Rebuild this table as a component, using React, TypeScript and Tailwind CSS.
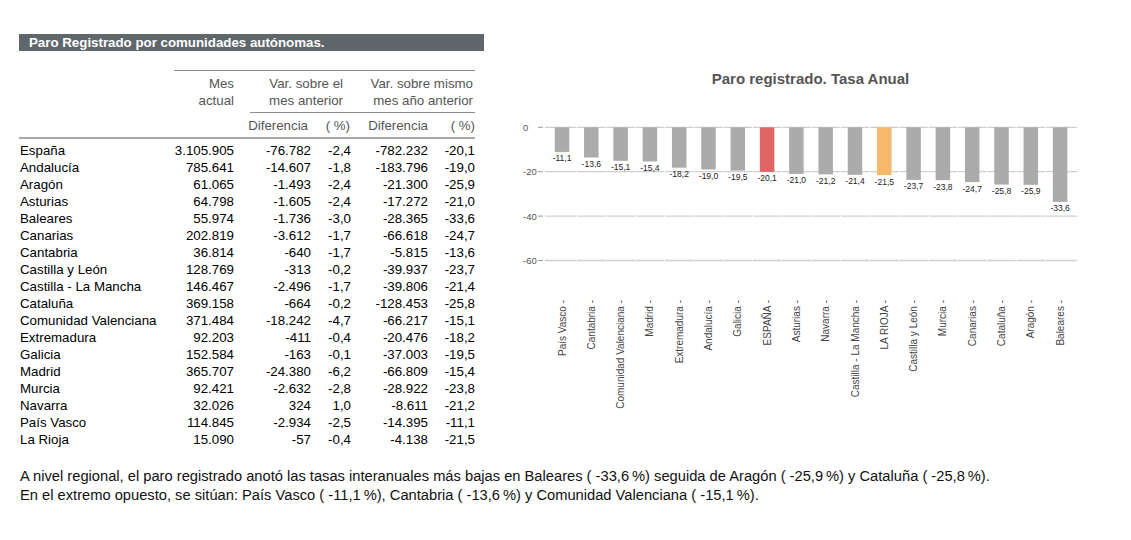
import React from "react";

const rows: [string, string, string, string, string, string][] = [
  ["España", "3.105.905", "-76.782", "-2,4", "-782.232", "-20,1"],
  ["Andalucía", "785.641", "-14.607", "-1,8", "-183.796", "-19,0"],
  ["Aragón", "61.065", "-1.493", "-2,4", "-21.300", "-25,9"],
  ["Asturias", "64.798", "-1.605", "-2,4", "-17.272", "-21,0"],
  ["Baleares", "55.974", "-1.736", "-3,0", "-28.365", "-33,6"],
  ["Canarias", "202.819", "-3.612", "-1,7", "-66.618", "-24,7"],
  ["Cantabria", "36.814", "-640", "-1,7", "-5.815", "-13,6"],
  ["Castilla y León", "128.769", "-313", "-0,2", "-39.937", "-23,7"],
  ["Castilla - La Mancha", "146.467", "-2.496", "-1,7", "-39.806", "-21,4"],
  ["Cataluña", "369.158", "-664", "-0,2", "-128.453", "-25,8"],
  ["Comunidad Valenciana", "371.484", "-18.242", "-4,7", "-66.217", "-15,1"],
  ["Extremadura", "92.203", "-411", "-0,4", "-20.476", "-18,2"],
  ["Galicia", "152.584", "-163", "-0,1", "-37.003", "-19,5"],
  ["Madrid", "365.707", "-24.380", "-6,2", "-66.809", "-15,4"],
  ["Murcia", "92.421", "-2.632", "-2,8", "-28.922", "-23,8"],
  ["Navarra", "32.026", "324", "1,0", "-8.611", "-21,2"],
  ["País Vasco", "114.845", "-2.934", "-2,5", "-14.395", "-11,1"],
  ["La Rioja", "15.090", "-57", "-0,4", "-4.138", "-21,5"],
];

const bars: [string, number, string][] = [
  ["País Vasco", -11.1, "#ababab"],
  ["Cantabria", -13.6, "#ababab"],
  ["Comunidad Valenciana", -15.1, "#ababab"],
  ["Madrid", -15.4, "#ababab"],
  ["Extremadura", -18.2, "#ababab"],
  ["Andalucía", -19.0, "#ababab"],
  ["Galicia", -19.5, "#ababab"],
  ["ESPAÑA", -20.1, "#e06666"],
  ["Asturias", -21.0, "#ababab"],
  ["Navarra", -21.2, "#ababab"],
  ["Castilla - La Mancha", -21.4, "#ababab"],
  ["LA RIOJA", -21.5, "#f6b96b"],
  ["Castilla y León", -23.7, "#ababab"],
  ["Murcia", -23.8, "#ababab"],
  ["Canarias", -24.7, "#ababab"],
  ["Cataluña", -25.8, "#ababab"],
  ["Aragón", -25.9, "#ababab"],
  ["Baleares", -33.6, "#ababab"],
];

const Y0 = 127.3;
const K = 2.22;
const X0 = 562;
const STEP = 29.3;
const BW = 14.5;
const FF = "'Liberation Sans', Arial, sans-serif";

function Chart() {
  const grid = [0, -20, -40, -60];
  return (
    <svg width={600} height={460} viewBox="500 0 600 460" className="block shrink-0">
      <text x={810.5} y={84} textAnchor="middle" fontFamily={FF} fontWeight="bold" fontSize={15} fill="#555555">
        Paro registrado. Tasa Anual
      </text>
      {grid.map((g) => {
        const y = Y0 - g * K;
        return (
          <g key={g}>
            <text x={523} y={y + 3.5} fontFamily={FF} fontSize={9.5} fill="#555555">
              {g}
            </text>
            <line x1={538} x2={543} y1={y} y2={y} stroke="#9a9a9a" strokeWidth={1} />
            <line x1={545} x2={1077} y1={y} y2={y} stroke="#cfcfcf" strokeWidth={1.3} />
            {bars.slice(0, 17).map((_, i) => (
              <rect key={i} x={X0 + i * STEP + STEP / 2 - 0.5} y={y - 1} width={1} height={2} fill="#ffffff" />
            ))}
          </g>
        );
      })}
      {bars.map(([name, v, color], i) => {
        const cx = X0 + i * STEP;
        const h = -v * K;
        return (
          <g key={name}>
            <rect x={cx - BW / 2} y={Y0} width={BW} height={h} fill={color} />
            <text x={cx} y={Y0 + h + 9.5} textAnchor="middle" fontFamily={FF} fontSize={8.5} fill="#222222">
              {v.toFixed(1).replace(".", ",")}
            </text>
            <text
              transform={`translate(${cx + 3.5}, 300) rotate(-90)`}
              textAnchor="end"
              fontFamily={FF}
              fontSize={10}
              fill="#444444"
            >
              {name} -
            </text>
          </g>
        );
      })}
    </svg>
  );
}

export default function App() {
  return (
    <div className="w-[1131px] h-[540px] bg-white font-['Liberation_Sans',Arial,sans-serif] text-black overflow-hidden">
      <div className="flex">
        <div className="w-[500px] shrink-0 pl-[19px] pt-[34px]">
          <div className="w-[465px] h-[17px] bg-[#5f676b] text-white font-bold text-[13.3px] leading-[17px] pl-[10px]">
            Paro Registrado por comunidades autónomas.
          </div>
          <div className="mt-[19px] w-[456px]">
            <div className="flex">
              <div className="w-[155px]" />
              <div className="w-[301px] border-t border-[#8c8c8c]">
                <div className="flex text-[#555555] text-[13.3px] leading-[17px]">
                  <div className="w-[60px] text-right pt-[4px]">
                    Mes
                    <br />
                    actual
                  </div>
                  <div className="w-[241px]">
                    <div className="flex h-[41px] pt-[4px]">
                      <div className="w-[117px] text-right pr-[8px]">
                        Var. sobre el
                        <br />
                        mes anterior
                      </div>
                      <div className="w-[124px] text-right pr-[2px]">
                        Var. sobre mismo
                        <br />
                        mes año anterior
                      </div>
                    </div>
                    <div className="ml-[16px] border-t border-[#8c8c8c]" />
                    <div className="flex pt-[3.5px] pb-[3.5px]">
                      <div className="w-[77px] text-right pr-[3px]">Diferencia</div>
                      <div className="w-[40px] text-right pr-[1px]">( %)</div>
                      <div className="w-[77px] text-right">Diferencia</div>
                      <div className="w-[47px] text-right">( %)</div>
                    </div>
                  </div>
                </div>
              </div>
            </div>
            <div className="border-t-2 border-[#a8a8a8] pt-[2.5px] text-[13.3px] leading-[17px]">
              {rows.map((r) => (
                <div key={r[0]} className="flex h-[17px]">
                  <div className="w-[155px] pl-[1px] whitespace-nowrap">{r[0]}</div>
                  <div className="w-[60px] text-right">{r[1]}</div>
                  <div className="w-[77px] text-right">{r[2]}</div>
                  <div className="w-[40px] text-right">{r[3]}</div>
                  <div className="w-[77px] text-right">{r[4]}</div>
                  <div className="w-[47px] text-right">{r[5]}</div>
                </div>
              ))}
            </div>
          </div>
        </div>
        <Chart />
      </div>
      <div className="pl-[20px] pt-[6.5px] text-[14.7px] leading-[19px] text-[#111111] whitespace-nowrap">
        <p>
          A nivel regional, el paro registrado anotó las tasas interanuales más bajas en Baleares ( -33,6{"\u2009"}%) seguida de Aragón ( -25,9{"\u2009"}%) y Cataluña ( -25,8{"\u2009"}%).
        </p>
        <p>
          En el extremo opuesto, se sitúan: País Vasco ( -11,1{"\u2009"}%), Cantabria ( -13,6{"\u2009"}%) y Comunidad Valenciana ( -15,1{"\u2009"}%).
        </p>
      </div>
    </div>
  );
}
